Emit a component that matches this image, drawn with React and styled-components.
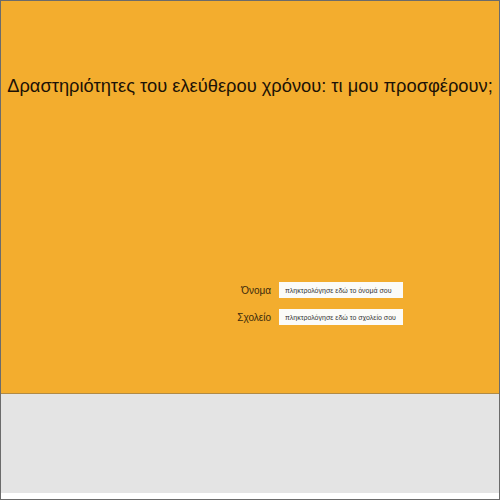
import React from "react";
import styled, { createGlobalStyle } from "styled-components";

const GlobalStyle = createGlobalStyle`
  html, body {
    margin: 0;
    padding: 0;
    background: #ffffff;
  }
  * {
    box-sizing: border-box;
  }
`;

const Frame = styled.div`
  width: 500px;
  height: 500px;
  border: 1px solid #6b6b6b;
  display: flex;
  flex-direction: column;
  background: #ffffff;
  font-family: "Liberation Sans", Arial, sans-serif;
`;

const Stage = styled.div`
  height: 393px;
  background: #f3ad2e;
  border-bottom: 1px solid #b08a45;
  display: flex;
  flex-direction: column;
  align-items: center;
`;

const Title = styled.h1`
  margin: 74px 0 0;
  font-size: 18.3px;
  font-weight: normal;
  color: #1c1206;
  white-space: nowrap;
  text-align: center;
`;

const Form = styled.div`
  align-self: flex-start;
  margin: 185px 0 0 226px;
  display: grid;
  grid-template-columns: 44px 124px;
  column-gap: 8px;
  row-gap: 11px;
  align-items: center;
`;

const Label = styled.label`
  font-size: 10px;
  color: #3a2a0c;
  text-align: right;
`;

const Field = styled.input`
  width: 124px;
  height: 16px;
  border: none;
  background: #fbfbf8;
  padding: 0 6px;
  font-family: "Liberation Sans", Arial, sans-serif;
  font-size: 7px;
  color: #333;
  outline: none;
  &::placeholder {
    color: #333;
  }
`;

const Footer = styled.div`
  height: 99px;
  background: #e4e4e4;
`;

export default function App() {
  return (
    <>
      <GlobalStyle />
      <Frame>
        <Stage>
          <Title>Δραστηριότητες του ελεύθερου χρόνου: τι μου προσφέρουν;</Title>
          <Form>
            <Label>Όνομα</Label>
            <Field placeholder="πληκτρολόγησε εδώ το όνομά σου" />
            <Label>Σχολείο</Label>
            <Field placeholder="πληκτρολόγησε εδώ το σχολείο σου" />
          </Form>
        </Stage>
        <Footer />
      </Frame>
    </>
  );
}
